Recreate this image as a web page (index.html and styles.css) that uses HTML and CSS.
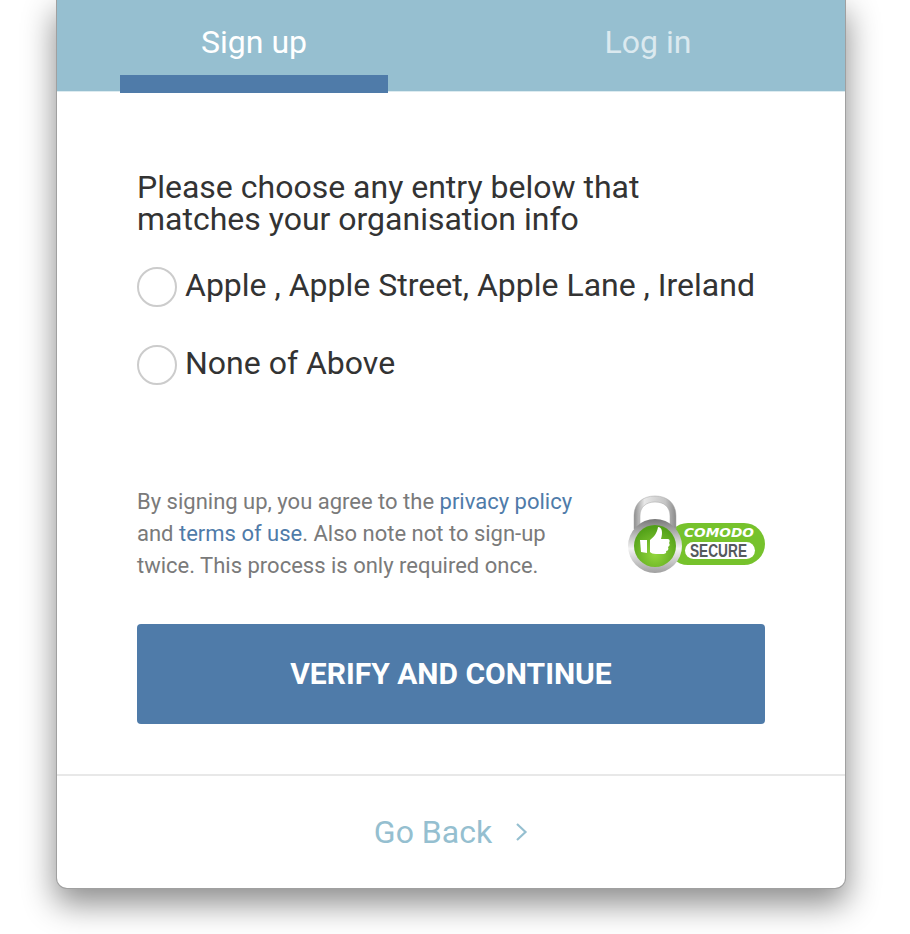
FILE: index.html
```html
<!DOCTYPE html>
<html lang="en">

<head>
    <meta charset="UTF-8">
    <meta name="viewport" content="width=device-width, initial-scale=1.0">
    <title>Sign up</title>
    <link rel="stylesheet" href="styles.css">
</head>

<body>
    <main class="card">
        <nav class="tabs">
            <a href="#" class="tab active">Sign up</a>
            <a href="#" class="tab">Log in</a>
        </nav>

        <form class="content">
            <p class="prompt">Please choose any entry below that<br>matches your organisation info</p>

            <label class="choice">
                <span class="radio"></span>
                <span class="choice-text">Apple , Apple Street, Apple Lane , Ireland</span>
            </label>
            <label class="choice">
                <span class="radio"></span>
                <span class="choice-text">None of Above</span>
            </label>

            <div class="legal">
                <p>By signing up, you agree to the <a href="#">privacy policy</a><br>and <a href="#">terms of use</a>. Also note not to sign-up<br>twice. This process is only required once.</p>

                <!-- comodo badge -->
                <svg class="badge" width="138" height="78" viewBox="0 0 138 78">
                    <defs>
                        <linearGradient id="shackle" x1="0" y1="0" x2="1" y2="0">
                            <stop offset="0" stop-color="#8d8d8d"/>
                            <stop offset="0.25" stop-color="#e8e8e8"/>
                            <stop offset="0.75" stop-color="#c4c4c4"/>
                            <stop offset="1" stop-color="#8a8a8a"/>
                        </linearGradient>
                        <linearGradient id="ring" x1="0" y1="0" x2="0" y2="1">
                            <stop offset="0" stop-color="#777"/>
                            <stop offset="0.55" stop-color="#f4f4f4"/>
                            <stop offset="1" stop-color="#a0a0a0"/>
                        </linearGradient>
                        <radialGradient id="lock" cx="0.5" cy="0.7" r="0.65">
                            <stop offset="0" stop-color="#93d63c"/>
                            <stop offset="1" stop-color="#52a018"/>
                        </radialGradient>
                    </defs>
                    <rect x="40" y="28" width="98" height="42" rx="21" fill="#76c22c"/>
                    <rect x="58" y="47" width="70" height="17" rx="8.500" fill="#fff"/>
                    <path d="M7 34V21C7 8 16 1 28 1S49 8 49 21V34H43V21C43 12 37 7 28 7S13 12 13 21V34Z" fill="url(#shackle)" stroke="#a5a5a5" stroke-width="0.5"/>
                    <circle cx="28" cy="51" r="27" fill="url(#ring)"/>
                    <circle cx="28" cy="51" r="21" fill="url(#lock)"/>
                    <path d="M13 45H20V58L14 57Z" fill="#fff"/>
                    <path d="M23 45C27 42 30 38 31 32C35 32 36 37 34 44H41C43 44 43 47 42 48C43 49 43 51 41 52C42 54 41 56 39 56C40 58 38 59 36 59H29C26 59 24 58 23 57Z" fill="#fff"/>
                    <text class="badge-top" x="57" y="42" textLength="70" lengthAdjust="spacingAndGlyphs">COMODO</text>
                    <text class="badge-bottom" x="63" y="62" textLength="57" lengthAdjust="spacingAndGlyphs">SECURE</text>
                </svg>
            </div>

            <button type="submit" class="verify">VERIFY AND CONTINUE</button>
        </form>

        <footer class="back">
            <a href="#">Go Back
                <svg width="13" height="20" viewBox="0 0 13 20">
                    <path d="M2 2L10.500 10L2 18" fill="none" stroke="#95bfd0" stroke-width="2.200"/>
                </svg>
            </a>
        </footer>
    </main>
</body>

</html>
```

FILE: styles.css
```css
html,
body {
    margin: 0;
    height: 934px;
    overflow: hidden;
    background: #fff;
}

body {
    font-family: Roboto, "Liberation Sans", sans-serif;
    color: #333;
}

p {
    margin: 0;
}

a {
    text-decoration: none;
}

.card {
    width: 788px;
    height: 888px;
    margin-left: 57px;
    display: flex;
    flex-direction: column;
    background: #fff;
    border-radius: 0 0 10px 10px;
    box-shadow: 0 0 0 1px #a0a0a0, 0 14px 32px 2px rgba(0, 0, 0, 0.45);
}

.tabs {
    height: 91px;
    flex-shrink: 0;
    display: flex;
    background: #96bfd0;
    border-bottom: 1px solid #dcebf0;
}

.tab {
    position: relative;
    flex: 1;
    padding-top: 23px;
    text-align: center;
    font-size: 32px;
    font-weight: 400;
    line-height: 38px;
    color: #dbe9ef;
}

.tab.active {
    color: #fff;
}

.tab.active::after {
    content: "";
    position: absolute;
    left: 63px;
    top: 75px;
    width: 268px;
    height: 18px;
    background: #4f7ba9;
}

.content {
    flex: 1;
    padding: 79px 80px 0;
}

.prompt {
    font-size: 32px;
    line-height: 32px;
    margin-bottom: 32px;
}

.choice {
    display: flex;
    align-items: center;
    gap: 8px;
    height: 40px;
    margin-bottom: 38px;
    font-size: 32px;
    line-height: 36px;
}

.choice-text {
    padding-bottom: 4px;
}

.radio {
    width: 36px;
    height: 36px;
    border: 2px solid #ccc;
    border-radius: 50%;
    background: #fff;
}

.legal {
    display: flex;
    justify-content: space-between;
    align-items: center;
    margin-top: 100px;
    height: 96px;
    font-size: 22px;
    line-height: 32px;
    color: #7a7a7a;
}

.legal p {
    padding-top: 2px;
}

.legal a {
    color: #4f7ba9;
}

.badge {
    margin-top: 2px;
}

.badge-top {
    font-family: "DejaVu Sans", sans-serif;
    font-size: 13px;
    font-weight: bold;
    font-style: italic;
    fill: #fff;
}

.badge-bottom {
    font-family: "Liberation Sans", sans-serif;
    font-size: 18px;
    font-weight: bold;
    fill: #55595c;
}

.verify {
    display: block;
    width: 100%;
    height: 100px;
    margin-top: 43px;
    padding: 0 0 2px;
    border: none;
    border-radius: 4px;
    background: #4f7ba9;
    color: #fff;
    font-family: inherit;
    font-size: 30px;
    font-weight: 700;
}

.back {
    height: 114px;
    flex-shrink: 0;
    display: flex;
    align-items: center;
    justify-content: center;
    border-top: 2px solid #e8e8e8;
    box-sizing: border-box;
}

.back a {
    display: flex;
    align-items: center;
    gap: 23px;
    font-size: 32px;
    font-weight: 400;
    color: #95bfd0;
}
```
